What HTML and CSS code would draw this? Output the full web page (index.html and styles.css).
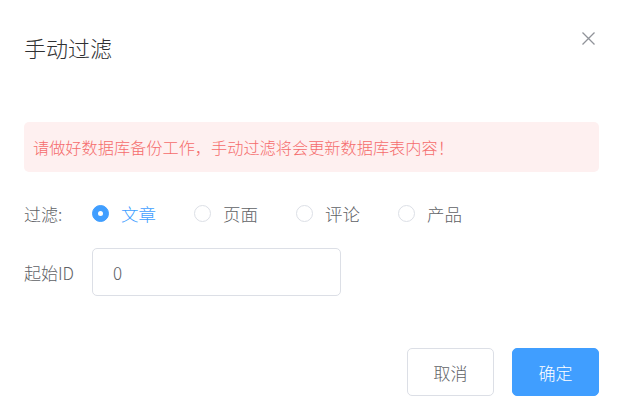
FILE: index.html
```html
<!DOCTYPE html>
<html lang="zh-CN">
<head>
    <meta charset="UTF-8">
    <title>手动过滤</title>
    <link rel="stylesheet" href="styles.css">
</head>
<body>
<div class="dialog">
    <div class="dialog-header">
        <span class="dialog-title">手动过滤</span>
        <span class="dialog-close">
            <svg width="13" height="13" viewBox="0 0 13 13">
                <path d="M0.5 0.5L12.5 12.5M12.5 0.5L0.5 12.5" stroke="#909399" stroke-width="1.3" fill="none"/>
            </svg>
        </span>
    </div>
    <div class="dialog-body">
        <div class="alert">请做好数据库备份工作，手动过滤将会更新数据库表内容！</div>
        <div class="form-item radios-row">
            <label class="form-label">过滤:</label>
            <div class="radio-group">
                <span class="radio checked"><span class="radio-inner"></span><span class="radio-text">文章</span></span>
                <span class="radio"><span class="radio-inner"></span><span class="radio-text">页面</span></span>
                <span class="radio"><span class="radio-inner"></span><span class="radio-text">评论</span></span>
                <span class="radio"><span class="radio-inner"></span><span class="radio-text">产品</span></span>
            </div>
        </div>
        <div class="form-item">
            <label class="form-label">起始ID</label>
            <input class="input" type="text" value="0">
        </div>
    </div>
    <div class="dialog-footer">
        <button class="btn">取消</button>
        <button class="btn btn-primary">确定</button>
    </div>
</div>
</body>
</html>
```

FILE: styles.css
```css
*{
    margin: 0;
    padding: 0;
    box-sizing: border-box;
}
body{
    background: #fff;
    font-family: "Noto Sans CJK SC", sans-serif;
    font-weight: 300;
    color: #606266;
}
.dialog{
    position: relative;
    width: 621px;
    height: 420px;
    background: #fff;
}
.dialog-header{
    padding: 32px 22px 0 24px;
}
.dialog-title{
    display: block;
    font-size: 22px;
    line-height: 30px;
    color: #303133;
}
.dialog-close{
    position: absolute;
    top: 32px;
    right: 26px;
    width: 13px;
    height: 13px;
}
.dialog-close svg{
    display: block;
}
.dialog-body{
    padding: 60px 22px 0 24px;
}
.alert{
    background: #fef0f0;
    color: #f56c6c;
    border-radius: 5px;
    padding: 16px 9px;
    font-size: 16.2px;
    line-height: 18px;
    margin-bottom: 17px;
}
.form-item{
    display: flex;
    align-items: center;
    height: 48px;
    margin-bottom: 11px;
}
.form-label{
    width: 68px;
    font-size: 17px;
    color: #606266;
}
.radio-group{
    display: flex;
    align-items: center;
}
.radio{
    display: flex;
    align-items: center;
    margin-right: 38px;
    font-size: 17.5px;
    color: #606266;
}
.radio-inner{
    width: 17px;
    height: 17px;
    border: 1px solid #dcdfe6;
    border-radius: 50%;
    background: #fff;
    position: relative;
}
.radio.checked .radio-inner{
    background: #409eff;
    border-color: #409eff;
}
.radio.checked .radio-inner::after{
    content: "";
    position: absolute;
    left: 50%;
    top: 50%;
    width: 5px;
    height: 5px;
    margin: -2.5px 0 0 -2.5px;
    border-radius: 50%;
    background: #fff;
}
.radio-text{
    margin-left: 12px;
}
.radio.checked .radio-text{
    color: #409eff;
}
.input{
    width: 249px;
    height: 48px;
    border: 1px solid #dcdfe6;
    border-radius: 5px;
    padding-left: 20px;
    font-family: "Noto Sans CJK SC", sans-serif;
    font-weight: 300;
    font-size: 17px;
    color: #606266;
    outline: none;
}
.dialog-footer{
    display: flex;
    justify-content: flex-end;
    padding: 41px 22px 0 24px;
}
.btn{
    width: 87px;
    height: 48px;
    margin-left: 18px;
    border: 1px solid #dcdfe6;
    border-radius: 5px;
    background: #fff;
    color: #606266;
    font-family: "Noto Sans CJK SC", sans-serif;
    font-weight: 300;
    font-size: 17px;
}
.btn-primary{
    background: #409eff;
    border-color: #409eff;
    color: #fff;
}
```
